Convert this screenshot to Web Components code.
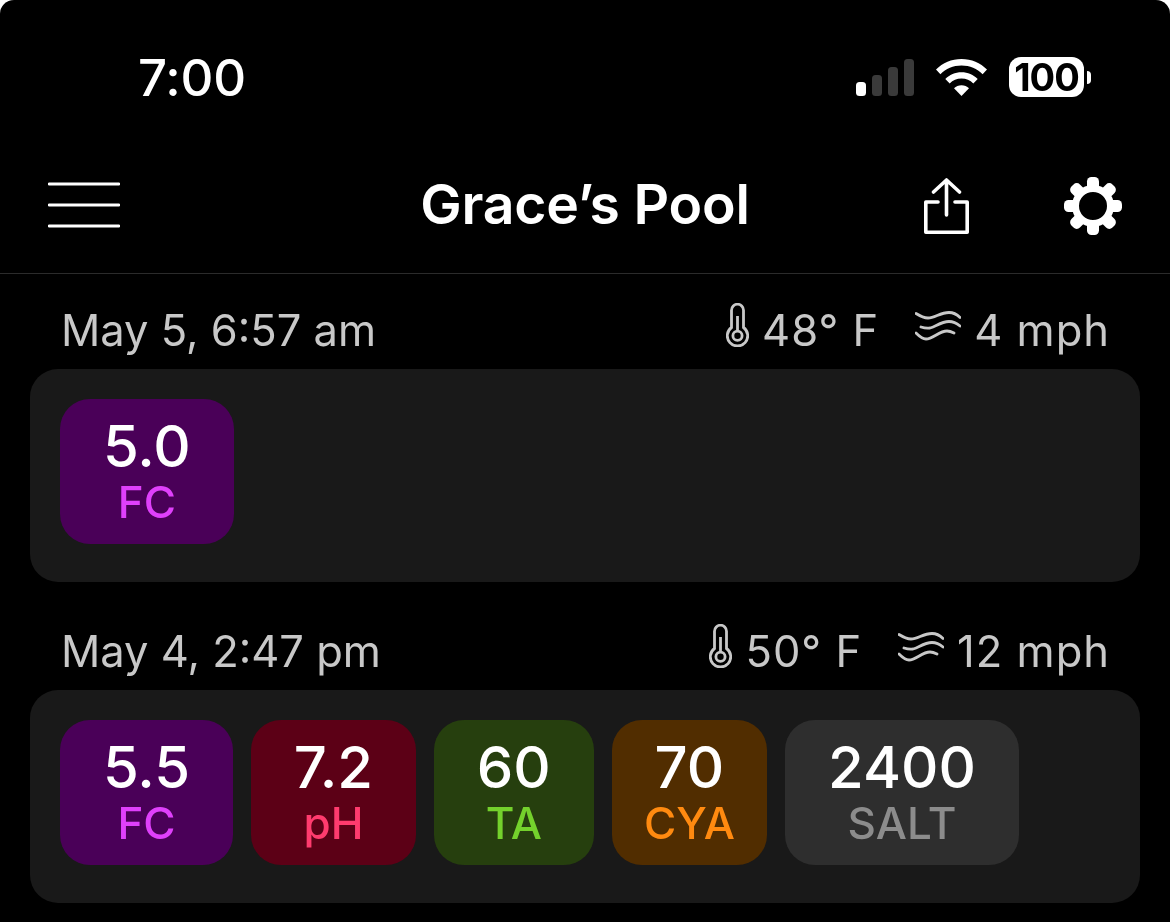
<!DOCTYPE html>
<html>
<head>
<meta charset="utf-8">
<style>
    html, body { margin: 0; height: 100%; background: #fff; overflow: hidden; }
    body { font-family: Inter, "Noto Sans", "Liberation Sans", sans-serif; color: #fff; }
</style>
</head>
<body>
<pool-app>
    <status-bar></status-bar>
    <nav-bar title="Grace’s Pool"></nav-bar>
    <reading-section date="May 5, 6:57 am" temp="48° F" wind="4 mph">
        <reading-chip value="5.0" label="FC" bg="#4a0058" fg="#df40fb"></reading-chip>
    </reading-section>
    <reading-section date="May 4, 2:47 pm" temp="50° F" wind="12 mph">
        <reading-chip value="5.5" label="FC" bg="#4a0058" fg="#df40fb"></reading-chip>
        <reading-chip style="min-width:81px" value="7.2" label="pH" bg="#5c0016" fg="#ff3b6e"></reading-chip>
        <reading-chip value="60" label="TA" bg="#263f0e" fg="#74d12c"></reading-chip>
        <reading-chip value="70" label="CYA" bg="#512d00" fg="#ff8a10"></reading-chip>
        <reading-chip value="2400" label="SALT" bg="#2e2e2e" fg="#8c8c8c"></reading-chip>
    </reading-section>
</pool-app>

<script>
class PoolApp extends HTMLElement {
    constructor() {
        super();
        this.attachShadow({ mode: 'open' });
        this.shadowRoot.innerHTML = `
            <style>
                :host { display: flex; flex-direction: column; width: 1170px; height: 922px; overflow: hidden; background: #000; border-radius: 14px 14px 0 0; will-change: transform; }
            </style>
            <slot></slot>
        `;
    }
}

class StatusBar extends HTMLElement {
    constructor() {
        super();
        this.attachShadow({ mode: 'open' });
        this.shadowRoot.innerHTML = `
            <style>
                :host { display: flex; align-items: center; justify-content: space-between; height: 156px; box-sizing: border-box; padding: 0 79px 0 138px; flex: none; }
                .time { font-size: 51px; font-weight: 500; letter-spacing: -0.2px; color: #fff; line-height: 156px; }
                .right { display: flex; align-items: center; margin-bottom: 2px; }
                svg { display: block; }
                .batt { display: flex; align-items: center; margin-left: 22px; }
                .level { width: 75px; height: 40px; border-radius: 12px; background: #fff; color: #000; font-size: 38px; font-weight: 700; line-height: 40px; text-align: center; letter-spacing: -1px; }
                .nub { width: 4px; height: 13px; margin-left: 3px; background: #fff; border-radius: 0 4px 4px 0; }
            </style>
            <div class="time">7:00</div>
            <div class="right">
                <svg width="58" height="37" viewBox="0 0 58 37" fill="#3a3a3a">
                    <rect x="0" y="23" width="10" height="14" rx="3.5" fill="#fff"/>
                    <rect x="16" y="16" width="10" height="21" rx="3.5"/>
                    <rect x="32" y="8" width="10" height="29" rx="3.5"/>
                    <rect x="48" y="0" width="10" height="37" rx="3.5"/>
                </svg>
                <svg style="margin-left:22px" width="51" height="37" viewBox="0 0 51 37" fill="#fff">
                    <path d="M25.5 0C35.5 0 44.3 3.9 51 10.6L46.6 15.2C41.1 9.7 33.8 6.4 25.5 6.4S9.9 9.7 4.4 15.2L0 10.6C6.7 3.9 15.5 0 25.5 0Z"/>
                    <path d="M25.5 13.2C31.8 13.2 37.5 15.7 41.7 19.9L37.3 24.4C34.2 21.4 30.1 19.6 25.5 19.6S16.8 21.4 13.7 24.4L9.3 19.9C13.5 15.7 19.2 13.2 25.5 13.2Z"/>
                    <path d="M25.5 26.2C28.4 26.2 31 27.3 33 29.2L25.5 37L18 29.2C20 27.3 22.6 26.2 25.5 26.2Z"/>
                </svg>
                <div class="batt"><div class="level">100</div><div class="nub"></div></div>
            </div>
        `;
    }
}

class NavBar extends HTMLElement {
    constructor() {
        super();
        this.attachShadow({ mode: 'open' });
        const teeth = [0, 45, 90, 135, 180, 225, 270, 315]
            .map(a => `<rect x="-6" y="-29" width="12" height="14" rx="4.5" transform="rotate(${a})"/>`).join('');
        this.shadowRoot.innerHTML = `
            <style>
                :host { display: grid; grid-template-columns: 1fr auto 1fr; align-items: center; height: 118px; flex: none; box-sizing: border-box; padding: 0 48px 21px 48px; border-bottom: 1px solid #2b2b2b; }
                h1 { margin: 0; font-size: 55.3px; font-weight: 600; color: #fff; letter-spacing: -0.2px; line-height: 96px; }
                svg { display: block; }
                .menu { margin-top: 2px; }
                .actions { display: flex; align-items: center; justify-content: flex-end; gap: 95px; margin-top: 4px; }
            </style>
            <svg class="menu" width="72" height="46" viewBox="0 0 72 46" stroke="#fff" stroke-width="2.8" stroke-linecap="round">
                <path d="M1 2H71M1 23H71M1 44H71"/>
            </svg>
            <h1>${this.getAttribute('title')}</h1>
            <div class="actions">
                <svg width="45" height="57" viewBox="0 0 45 57" fill="none" stroke="#fff" stroke-width="3.6" stroke-linecap="round" stroke-linejoin="round">
                    <path d="M14 24H1.8V54.2H43.2V24H31"/>
                    <path d="M22.5 37V2M9.5 14L22.5 2L35.5 14"/>
                </svg>
                <svg width="58" height="58" viewBox="-29 -29 58 58" fill="#fff">
                    ${teeth}
                    <circle r="17.5" fill="none" stroke="#fff" stroke-width="7"/>
                </svg>
            </div>
        `;
    }
}

class ReadingSection extends HTMLElement {
    constructor() {
        super();
        this.attachShadow({ mode: 'open' });
        this.shadowRoot.innerHTML = `
            <style>
                :host { display: block; flex: none; padding: 13px 30px 0; }
                :host(:first-of-type) { padding-top: 0; }
                header { display: flex; align-items: center; height: 48px; padding: 32px 30px 15px 31px; color: #c8c8c8; font-size: 43.5px; font-weight: 400; }
                .date { flex: 1; }
                .stat { display: flex; align-items: center; gap: 13px; letter-spacing: 1px; }
                .stat + .stat { margin-left: 36px; }
                svg { display: block; }
                .therm { margin-bottom: 10px; }
                .waves { margin-bottom: 8px; }
                .card { display: flex; gap: 18px; height: 213px; box-sizing: border-box; padding: 30px; background: #191919; border-radius: 28px; }
            </style>
            <header>
                <div class="date">${this.getAttribute('date')}</div>
                <div class="stat">
                    <svg class="therm" width="23" height="44" viewBox="0 0 23 44" fill="none" stroke="#c8c8c8" stroke-width="2.8">
                        <path d="M5.5 24.5V7.2a6 6 0 0 1 12 0V24.5a10.2 10.2 0 1 1-12 0Z"/>
                        <circle cx="11.5" cy="32.75" r="4.6"/>
                        <path d="M11.5 13V28"/>
                    </svg>
                    <span>${this.getAttribute('temp')}</span>
                </div>
                <div class="stat">
                    <svg class="waves" width="46" height="30" viewBox="0 0 46 30" fill="none" stroke="#c8c8c8" stroke-width="2.8" stroke-linecap="round">
                        <path d="M1 2.5C5 5 9 7 13 7C20 7 25 1.5 34 1.5C39 1.5 42 3.5 45 6.5"/>
                        <path d="M6 16C9 17 12 17.5 15 17C20 16 26 10.5 34 10.5C39 10.5 42 12.5 45 15"/>
                        <path d="M1 22C4 25 7 28 11 28C18 28 24 20 32 20C35 20 37 21 39 22"/>
                    </svg>
                    <span>${this.getAttribute('wind')}</span>
                </div>
            </header>
            <div class="card"><slot></slot></div>
        `;
    }
}

class ReadingChip extends HTMLElement {
    constructor() {
        super();
        this.attachShadow({ mode: 'open' });
        this.shadowRoot.innerHTML = `
            <style>
                :host { display: flex; flex-direction: column; align-items: center; height: 145px; box-sizing: border-box; padding: 0 42.9px; border-radius: 30px; background: ${this.getAttribute('bg')}; }
                .value { font-size: 58px; font-weight: 500; color: #fff; line-height: 62px; margin-top: 16px; }
                .label { font-size: 44px; font-weight: 500; color: ${this.getAttribute('fg')}; line-height: 50px; white-space: nowrap; }
                .label-wrap { width: 0; display: flex; justify-content: center; }
            </style>
            <div class="value">${this.getAttribute('value')}</div>
            <div class="label-wrap"><div class="label">${this.getAttribute('label')}</div></div>
        `;
    }
}

customElements.define('pool-app', PoolApp);
customElements.define('status-bar', StatusBar);
customElements.define('nav-bar', NavBar);
customElements.define('reading-section', ReadingSection);
customElements.define('reading-chip', ReadingChip);
</script>
</body>
</html>
